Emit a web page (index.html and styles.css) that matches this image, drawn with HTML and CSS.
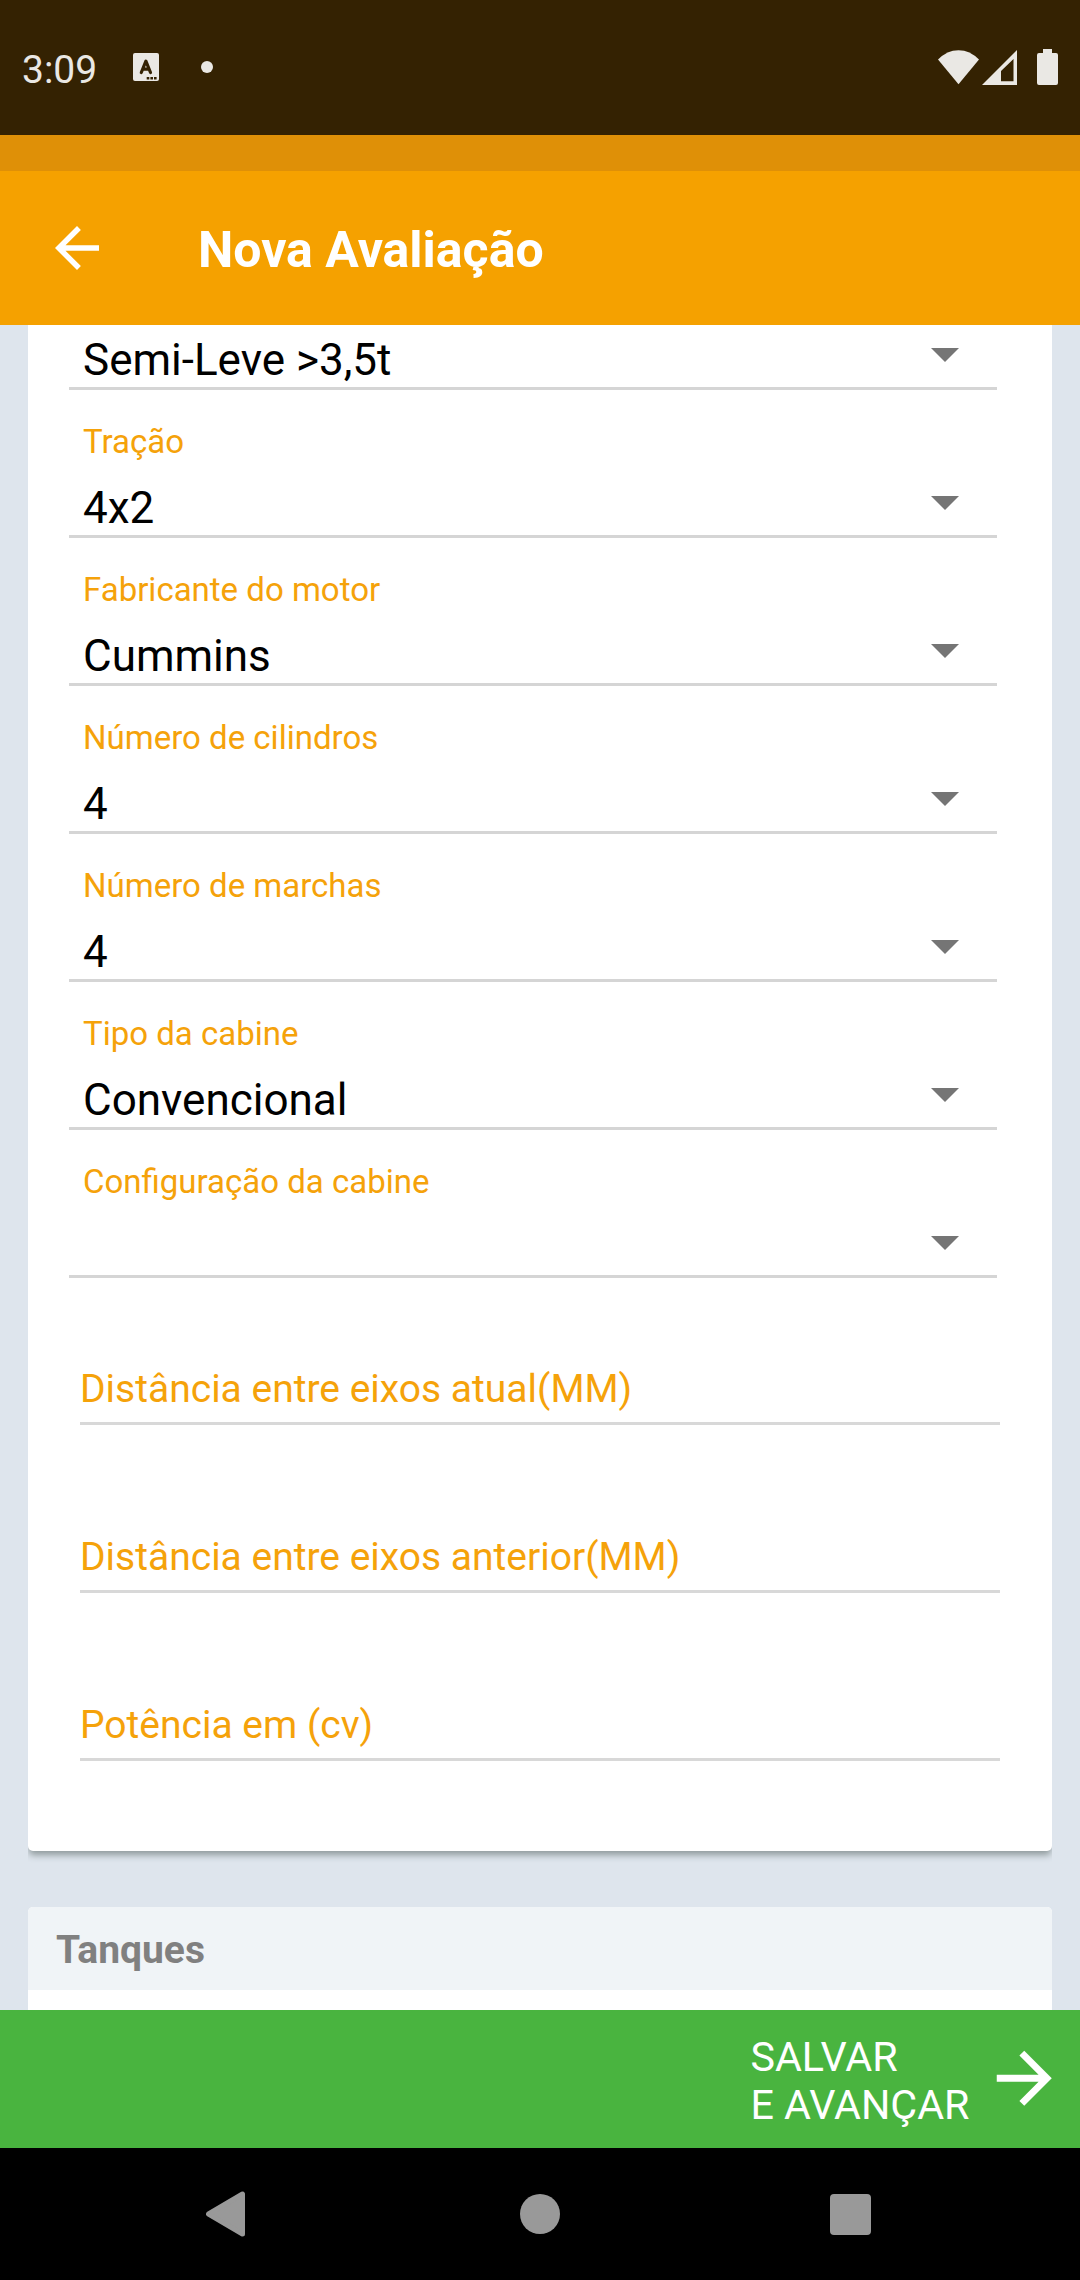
FILE: index.html
```html
<!DOCTYPE html>
<html lang="pt-BR">
<head>
<meta charset="utf-8">
<title>Nova Avaliação</title>
<link rel="stylesheet" href="styles.css">
</head>
<body>
<div class="screen">
  <div class="status">
    <span class="time">3:09</span>
    <svg class="note" width="26" height="28" viewBox="0 0 26 28"><rect width="26" height="28" rx="2" fill="#eae8e4"/><path d="M8.300 19.500 12.900 8.200 17.500 19.500M9.800 16.200h6.200" fill="none" stroke="#342202" stroke-width="3.200" stroke-linecap="round" stroke-linejoin="round"/><path d="M13.700 24h2.600v2.400h-2.600zM17.400 24h2.600v2.400h-2.600zM21 24h2.600v2.400h-2.600z" fill="#342202"/></svg>
    <span class="dot"></span>
    <svg class="signals" width="122" height="38" viewBox="937 48 122 38" fill="#eae8e4">
      <path d="M938 59.600Q947 50.200 958.500 50.200T979 59.600L958.500 84.300Z"/>
      <path fill-rule="evenodd" d="M982 85 1017 50V85ZM1001 81.300H1013.500V59L1001 71Z"/>
      <path d="M1043 49h9v4h4q2 0 2 2v28q0 2-2 2h-17q-2 0-2-2v-28q0-2 2-2h4z"/>
    </svg>
  </div>
  <div class="band"></div>
  <header class="appbar">
    <svg width="66" height="66" viewBox="0 0 24 24"><path fill="#fff" d="M20 11H7.830l5.590-5.590L12 4l-8 8 8 8 1.410-1.410L7.830 13H20z"/></svg>
    <h1>Nova Avaliação</h1>
  </header>
  <main class="content">
    <section class="card form">
      <div class="select first"><div class="value">Semi-Leve &gt;3,5t<i class="caret"></i></div></div>
      <div class="select"><label>Tração</label><div class="value">4x2<i class="caret"></i></div></div>
      <div class="select"><label>Fabricante do motor</label><div class="value">Cummins<i class="caret"></i></div></div>
      <div class="select"><label>Número de cilindros</label><div class="value">4<i class="caret"></i></div></div>
      <div class="select"><label>Número de marchas</label><div class="value">4<i class="caret"></i></div></div>
      <div class="select"><label>Tipo da cabine</label><div class="value">Convencional<i class="caret"></i></div></div>
      <div class="select"><label>Configuração da cabine</label><div class="value"><i class="caret"></i></div></div>
      <div class="inputs">
        <div class="input">Distância entre eixos atual(MM)</div>
        <div class="input">Distância entre eixos anterior(MM)</div>
        <div class="input">Potência em (cv)</div>
      </div>
    </section>
    <section class="card tanks"><h2>Tanques</h2></section>
  </main>
  <footer class="save">
    <span>SALVAR<br>E AVANÇAR</span>
    <svg width="82.500" height="82.500" viewBox="0 0 24 24"><path fill="#fff" d="M12 4l-1.410 1.410L16.170 11H4v2h12.170l-5.580 5.590L12 20l8-8z"/></svg>
  </footer>
  <nav class="navbar">
    <svg width="40" height="46" viewBox="206 2191.500 40 46"><path d="M208.500 2214.500 242.500 2194.500V2234.500Z" fill="#999" stroke="#999" stroke-width="5" stroke-linejoin="round"/></svg>
    <span class="home"></span>
    <span class="recent"></span>
  </nav>
</div>
</body>
</html>
```
FILE: styles.css
```css
* { box-sizing: border-box; }
body { margin: 0; font-family: Roboto, "Liberation Sans", sans-serif; }
.screen { width: 1080px; height: 2280px; display: flex; flex-direction: column; overflow: hidden; background: #dee5ed; }
svg { display: block; flex: none; }

.status { height: 135px; flex: none; display: flex; align-items: flex-start; background: #342202; color: #eae8e4; }
.time { width: 111px; margin: 47px 0 0 22px; font-size: 39px; line-height: 46px; }
.note { margin-top: 53px; }
.dot { width: 12px; height: 12px; margin: 61px 0 0 42px; border-radius: 50%; background: #eae8e4; }
.signals { margin: 48px 21px 0 auto; }
.band { height: 36px; flex: none; background: #df9007; }
.appbar { height: 154px; flex: none; display: flex; align-items: center; padding-left: 44px; background: #f5a100; color: #fff; }
.appbar h1 { margin: 4px 0 0 88px; font-size: 50px; line-height: 60px; font-weight: 700; }

.content { height: 1685px; flex: none; padding: 0 28px; overflow: hidden; display: flex; flex-direction: column; gap: 56px; }
.card { flex: none; background: #fff; border-radius: 5px; }
.form { height: 1526px; padding: 0 55px 0 41px; border-top-left-radius: 0; border-top-right-radius: 0; box-shadow: 0 5px 7px -1px #8e999b; clip-path: inset(0 0 -20px 0); }
.select { height: 148px; padding-left: 14px; display: flex; flex-direction: column; border-bottom: 3px solid #d5d5d5; }
.select.first { height: 65px; padding-top: 8px; }
.select label { padding-top: 32px; height: 91px; font-size: 33px; line-height: 40px; color: #f5a20a; }
.value { height: 54px; display: flex; align-items: flex-start; justify-content: space-between; font-size: 44px; line-height: 54px; color: #000; }
.caret { width: 28px; height: 14px; margin: 15px 38px 0 auto; background: #757575; clip-path: polygon(0 0, 100% 0, 50% 100%); }
.inputs { padding-left: 11px; margin-right: -3px; }
.input { height: 168px; padding-top: 109px; border-bottom: 3px solid #d8d8d8; font-size: 39px; line-height: 46px; color: #f5a20a; }
.input:first-child { height: 147px; padding-top: 88px; }
.tanks { height: 200px; overflow: hidden; }
.tanks h2 { margin: 0; height: 83px; padding: 20px 28px; background: #f0f4f7; color: #808080; font-size: 39px; line-height: 46px; font-weight: 700; }

.save { height: 138px; flex: none; display: flex; align-items: center; justify-content: flex-end; gap: 13px; padding-right: 15px; background: #49b43f; color: #fff; }
.save span { padding-top: 3px; font-size: 41.25px; line-height: 48px; }
.save svg { margin-top: -1px; }
.navbar { height: 132px; flex: none; display: flex; align-items: center; padding-left: 206px; background: #000; }
.home { width: 40px; height: 40px; margin-left: 274px; border-radius: 50%; background: #999; }
.recent { width: 41px; height: 41px; margin-left: 270px; border-radius: 4px; background: #999; }
```
